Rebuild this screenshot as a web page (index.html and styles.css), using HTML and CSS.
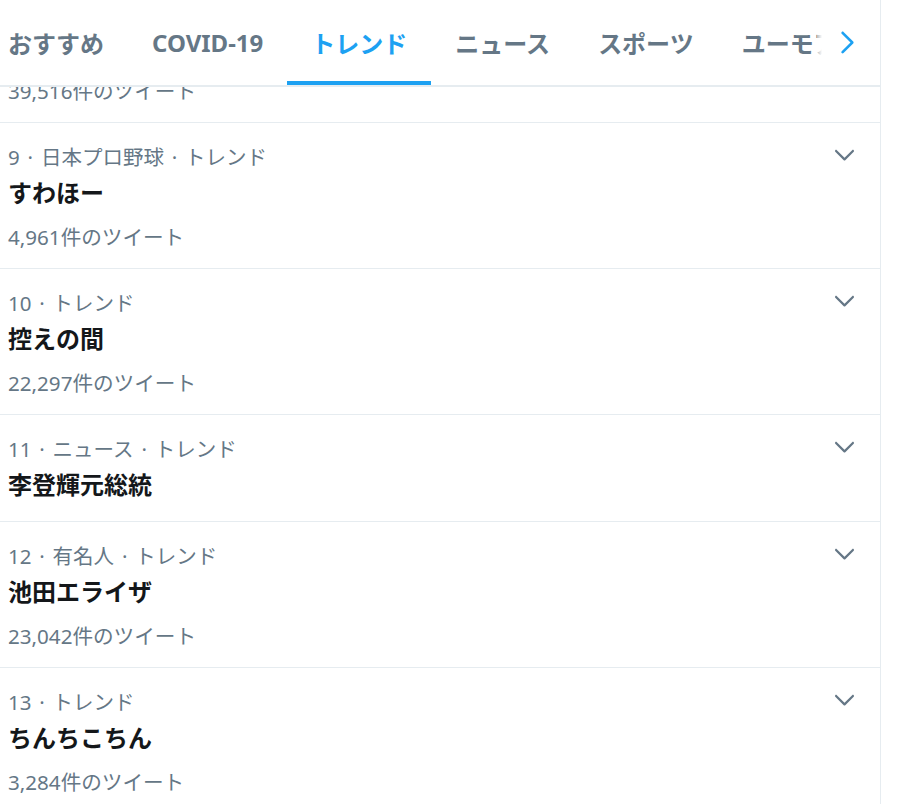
FILE: index.html
```html
<!DOCTYPE html>
<html lang="ja">
<head>
<meta charset="utf-8">
<title>トレンド</title>
<link rel="stylesheet" href="styles.css">
</head>
<body>
<div class="column">
  <header class="tabbar">
    <nav class="tabs">
      <a class="tab">おすすめ</a>
      <a class="tab">COVID-19</a>
      <a class="tab active">トレンド</a>
      <a class="tab">ニュース</a>
      <a class="tab">スポーツ</a>
      <a class="tab">ユーモア</a>
    </nav>
    <button class="scroll-btn" aria-label="次へ">
      <svg viewBox="0 0 24 24" width="31" height="31"><path d="M17.207 11.293l-7.5-7.5c-.39-.39-1.023-.39-1.414 0s-.39 1.023 0 1.414L15.086 12l-6.793 6.793c-.39.39-.39 1.023 0 1.414.195.195.45.293.707.293s.512-.098.707-.293l7.5-7.5c.39-.39.39-1.023 0-1.414z"/></svg>
    </button>
  </header>

  <section class="list">
    <div class="trend partial">
      <div class="count">39,516件のツイート</div>
    </div>

    <div class="trend">
      <div class="meta">9 · 日本プロ野球 · トレンド</div>
      <div class="title">すわほー</div>
      <div class="count">4,961件のツイート</div>
      <svg class="caret" viewBox="0 0 24 24"><path d="M20.207 8.147c-.39-.39-1.023-.39-1.414 0L12 14.94 5.207 8.147c-.39-.39-1.023-.39-1.414 0-.39.39-.39 1.023 0 1.414l7.5 7.5c.195.196.45.294.707.294s.512-.098.707-.293l7.5-7.5c.39-.39.39-1.023 0-1.414z"/></svg>
    </div>

    <div class="trend">
      <div class="meta">10 · トレンド</div>
      <div class="title">控えの間</div>
      <div class="count">22,297件のツイート</div>
      <svg class="caret" viewBox="0 0 24 24"><path d="M20.207 8.147c-.39-.39-1.023-.39-1.414 0L12 14.94 5.207 8.147c-.39-.39-1.023-.39-1.414 0-.39.39-.39 1.023 0 1.414l7.5 7.5c.195.196.45.294.707.294s.512-.098.707-.293l7.5-7.5c.39-.39.39-1.023 0-1.414z"/></svg>
    </div>

    <div class="trend">
      <div class="meta">11 · ニュース · トレンド</div>
      <div class="title">李登輝元総統</div>
      <svg class="caret" viewBox="0 0 24 24"><path d="M20.207 8.147c-.39-.39-1.023-.39-1.414 0L12 14.94 5.207 8.147c-.39-.39-1.023-.39-1.414 0-.39.39-.39 1.023 0 1.414l7.5 7.5c.195.196.45.294.707.294s.512-.098.707-.293l7.5-7.5c.39-.39.39-1.023 0-1.414z"/></svg>
    </div>

    <div class="trend">
      <div class="meta">12 · 有名人 · トレンド</div>
      <div class="title">池田エライザ</div>
      <div class="count">23,042件のツイート</div>
      <svg class="caret" viewBox="0 0 24 24"><path d="M20.207 8.147c-.39-.39-1.023-.39-1.414 0L12 14.94 5.207 8.147c-.39-.39-1.023-.39-1.414 0-.39.39-.39 1.023 0 1.414l7.5 7.5c.195.196.45.294.707.294s.512-.098.707-.293l7.5-7.5c.39-.39.39-1.023 0-1.414z"/></svg>
    </div>

    <div class="trend">
      <div class="meta">13 · トレンド</div>
      <div class="title">ちんちこちん</div>
      <div class="count">3,284件のツイート</div>
      <svg class="caret" viewBox="0 0 24 24"><path d="M20.207 8.147c-.39-.39-1.023-.39-1.414 0L12 14.94 5.207 8.147c-.39-.39-1.023-.39-1.414 0-.39.39-.39 1.023 0 1.414l7.5 7.5c.195.196.45.294.707.294s.512-.098.707-.293l7.5-7.5c.39-.39.39-1.023 0-1.414z"/></svg>
    </div>
  </section>
</div>
</body>
</html>
```

FILE: styles.css
```css
* { box-sizing: border-box; }

html, body {
  margin: 0;
  padding: 0;
  background: #ffffff;
  height: 100%;
  overflow: hidden;
}

body {
  font-family: "Noto Sans", "Noto Sans CJK JP", sans-serif;
  color: #14171a;
}

.column {
  width: 881px;
  min-height: 100%;
  border-right: 1px solid #e6ecf0;
}

.tabbar {
  position: relative;
  z-index: 2;
  height: 87px;
  background: #ffffff;
  border-bottom: 2px solid #e6ecf0;
  overflow: hidden;
}

.tabs {
  display: flex;
  height: 85px;
  margin-left: -16px;
  white-space: nowrap;
  overflow: hidden;
}

.tab {
  position: relative;
  display: flex;
  align-items: center;
  flex-shrink: 0;
  height: 85px;
  padding: 0 24px;
  font-size: 24px;
  font-weight: 700;
  color: #657786;
  cursor: pointer;
}

.tab.active {
  color: #1da1f2;
}

.tab.active::after {
  content: "";
  position: absolute;
  left: 0;
  right: 0;
  bottom: 0;
  height: 4px;
  background: #1da1f2;
}

.scroll-btn {
  position: absolute;
  top: 0;
  right: 0;
  width: 63px;
  height: 85px;
  border: 0;
  padding: 0;
  background: linear-gradient(to right, rgba(255,255,255,0.5) 0, #ffffff 5px);
  display: flex;
  align-items: center;
  justify-content: center;
}

.scroll-btn svg {
  fill: #1da1f2;
  margin-left: -4px;
}

.list {
  position: relative;
  z-index: 1;
  margin-top: -9px;
}

.trend {
  position: relative;
  padding: 16px 60px 18px 8px;
  border-bottom: 1px solid #e6ecf0;
}

.trend.partial {
  padding-top: 0;
}

.meta {
  font-size: 20.5px;
  line-height: 36px;
  word-spacing: 2.5px;
  color: #657786;
}

.title {
  font-size: 24px;
  line-height: 36px;
  font-weight: 700;
  color: #14171a;
}

.count {
  margin-top: 13px;
  font-size: 20.6px;
  line-height: 26px;
  color: #657786;
}

.trend.partial .count {
  margin-top: 0;
}

.caret {
  position: absolute;
  top: 18px;
  right: 22px;
  width: 27px;
  height: 27px;
  fill: #657786;
}
```
